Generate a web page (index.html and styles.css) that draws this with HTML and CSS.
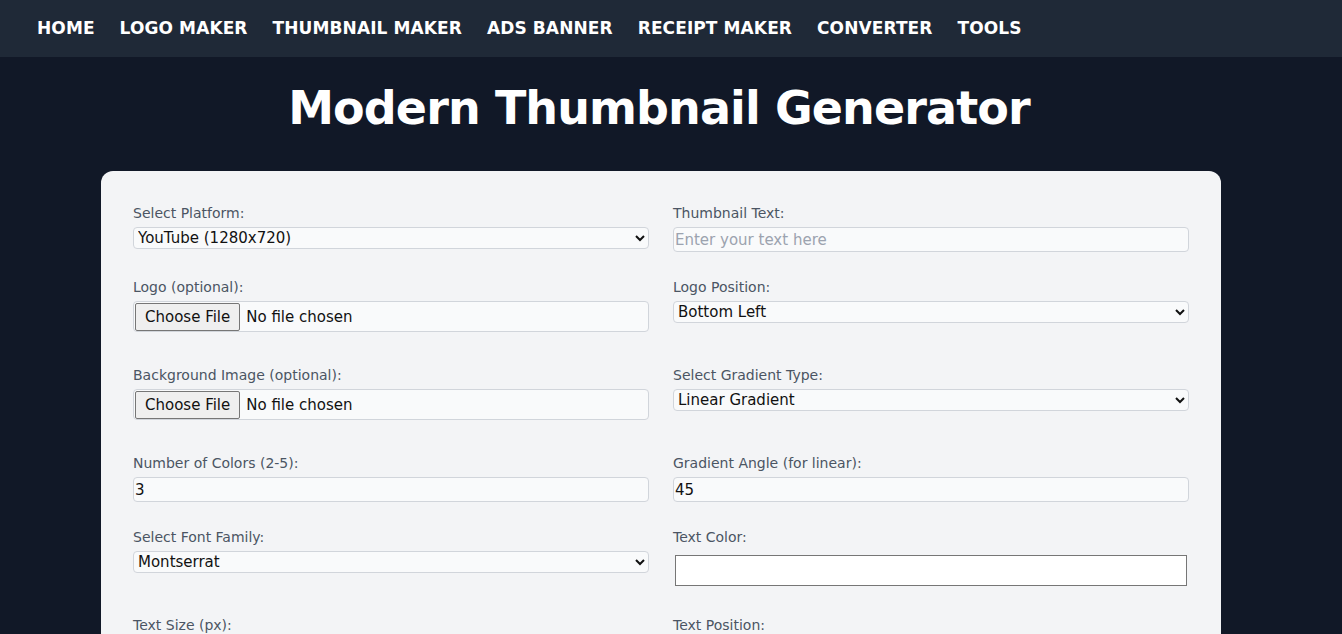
FILE: index.html
```html
<!DOCTYPE html>
<html lang="en">
<head>
<meta charset="utf-8">
<title>Modern Thumbnail Generator</title>
<link rel="stylesheet" href="styles.css">
</head>
<body>
<nav class="topnav">
  <a href="#" class="nav-link">HOME</a>
  <a href="#" class="nav-link">LOGO MAKER</a>
  <a href="#" class="nav-link">THUMBNAIL MAKER</a>
  <a href="#" class="nav-link">ADS BANNER</a>
  <a href="#" class="nav-link">RECEIPT MAKER</a>
  <a href="#" class="nav-link">CONVERTER</a>
  <a href="#" class="nav-link">TOOLS</a>
</nav>
<main class="page">
  <h1 class="title">Modern Thumbnail Generator</h1>
  <section class="card">
    <div class="form-grid">
      <div class="group">
        <label class="label" for="platform">Select Platform:</label>
        <select id="platform" class="field select">
          <option>YouTube (1280x720)</option>
          <option>Instagram (1080x1080)</option>
          <option>Facebook (1200x630)</option>
        </select>
      </div>
      <div class="group">
        <label class="label" for="text">Thumbnail Text:</label>
        <input id="text" class="field text" type="text" placeholder="Enter your text here">
      </div>
      <div class="group">
        <label class="label" for="logo">Logo (optional):</label>
        <input id="logo" class="field file" type="file">
      </div>
      <div class="group">
        <label class="label" for="logopos">Logo Position:</label>
        <select id="logopos" class="field select">
          <option>Bottom Left</option>
          <option>Bottom Right</option>
          <option>Top Left</option>
          <option>Top Right</option>
        </select>
      </div>
      <div class="group">
        <label class="label" for="bg">Background Image (optional):</label>
        <input id="bg" class="field file" type="file">
      </div>
      <div class="group">
        <label class="label" for="gradtype">Select Gradient Type:</label>
        <select id="gradtype" class="field select">
          <option>Linear Gradient</option>
          <option>Radial Gradient</option>
        </select>
      </div>
      <div class="group">
        <label class="label" for="ncolors">Number of Colors (2-5):</label>
        <input id="ncolors" class="field text" type="number" min="2" max="5" value="3">
      </div>
      <div class="group">
        <label class="label" for="angle">Gradient Angle (for linear):</label>
        <input id="angle" class="field text" type="number" value="45">
      </div>
      <div class="group">
        <label class="label" for="font">Select Font Family:</label>
        <select id="font" class="field select">
          <option>Montserrat</option>
          <option>Roboto</option>
          <option>Open Sans</option>
        </select>
      </div>
      <div class="group">
        <label class="label" for="tcolor">Text Color:</label>
        <input id="tcolor" class="field color" type="color" value="#ffffff">
      </div>
      <div class="group">
        <label class="label" for="tsize">Text Size (px):</label>
        <input id="tsize" class="field text" type="number" value="60">
      </div>
      <div class="group">
        <label class="label" for="tpos">Text Position:</label>
        <select id="tpos" class="field select">
          <option>Center</option>
          <option>Top</option>
          <option>Bottom</option>
        </select>
      </div>
      <div class="group">
        <label class="label" for="c1">Color 1:</label>
        <input id="c1" class="field color" type="color" value="#ff5f6d">
      </div>
      <div class="group">
        <label class="label" for="c2">Color 2:</label>
        <input id="c2" class="field color" type="color" value="#ffc371">
      </div>
      <div class="group">
        <label class="label" for="c3">Color 3:</label>
        <input id="c3" class="field color" type="color" value="#6a82fb">
      </div>
      <div class="group">
        <label class="label" for="shadow">Text Shadow:</label>
        <select id="shadow" class="field select">
          <option>None</option>
          <option>Soft</option>
          <option>Hard</option>
        </select>
      </div>
    </div>
    <div class="actions">
      <button class="btn" type="button">Generate Thumbnail</button>
      <button class="btn btn-alt" type="button">Download</button>
    </div>
    <div class="preview">
      <div class="preview-canvas">Preview</div>
    </div>
  </section>
  <footer class="footer">© 2024 Modern Thumbnail Generator</footer>
</main>
</body>
</html>
```
FILE: styles.css
```css
html {
  background: #111827;
}
::-webkit-scrollbar {
  width: 6px;
}
::-webkit-scrollbar-track {
  background: #2c2c2c;
}
::-webkit-scrollbar-thumb {
  background: #a3a3a3;
}
body {
  margin: 0;
  background: #111827;
  font-family: "DejaVu Sans", "Liberation Sans", sans-serif;
  color: #111827;
}
.topnav {
  height: 57px;
  background: #1f2937;
  display: flex;
  align-items: flex-start;
  gap: 25px;
  padding-left: 37px;
}
.nav-link {
  color: #ffffff;
  text-decoration: none;
  font-weight: bold;
  font-size: 17px;
  line-height: 56px;
  letter-spacing: 0.1px;
}
.page {
  padding-top: 24px;
  padding-bottom: 60px;
}
.title {
  margin: 0 0 35px 99px;
  width: 1120px;
  text-align: center;
  color: #ffffff;
  font-size: 46px;
  line-height: 55px;
  letter-spacing: -0.9px;
  font-weight: bold;
}
.card {
  width: 1120px;
  box-sizing: border-box;
  margin-left: 101px;
  background: #f3f4f6;
  border-radius: 12px;
  padding: 32px;
}
.form-grid {
  display: grid;
  grid-template-columns: 1fr 1fr;
  column-gap: 24px;
  row-gap: 25px;
}
.group {
  display: flex;
  flex-direction: column;
  align-items: stretch;
}
.label {
  font-size: 14px;
  line-height: 20px;
  color: #4b5563;
  margin-bottom: 4px;
}
.field {
  font-family: "DejaVu Sans", "Liberation Sans", sans-serif;
  font-size: 15px;
  color: #111111;
  background: #f9fafb;
  border: 1px solid #d1d5db;
  border-radius: 4px;
  box-sizing: border-box;
  margin: 0;
  width: 100%;
}
.select {
  height: 22px;
  padding: 0;
}
.text {
  height: 25px;
  padding: 0 1px;
}
.text::placeholder {
  color: #9ca3af;
}
.text::-webkit-inner-spin-button,
.text::-webkit-outer-spin-button {
  -webkit-appearance: none;
  margin: 0;
}
.file {
  height: 31px;
  padding: 1px;
  margin-bottom: 8px;
  color: #111111;
}
.file::file-selector-button {
  font-family: inherit;
  font-size: 15px;
  height: 28px;
  padding: 0 9px;
  margin: 0 6px 0 0;
  border: 1px solid #767676;
  border-radius: 2px;
  background: #efefef;
  color: #111111;
}
.color {
  height: 39px;
  padding: 0;
  border: 1px solid transparent;
  background: transparent;
}
.color::-webkit-color-swatch-wrapper {
  padding: 3px 1px;
}
.color::-webkit-color-swatch {
  border: 1px solid #767676;
  border-radius: 0;
}
.actions {
  display: flex;
  gap: 16px;
  margin-top: 32px;
}
.btn {
  font-family: inherit;
  font-size: 16px;
  font-weight: bold;
  color: #ffffff;
  background: #2563eb;
  border: none;
  border-radius: 6px;
  padding: 12px 24px;
}
.btn-alt {
  background: #10b981;
}
.preview {
  margin-top: 32px;
}
.preview-canvas {
  aspect-ratio: 16 / 9;
  background: #e5e7eb;
  border-radius: 8px;
  display: flex;
  align-items: center;
  justify-content: center;
  color: #6b7280;
  font-size: 18px;
}
.footer {
  margin: 40px 0 0 101px;
  width: 1120px;
  text-align: center;
  color: #9ca3af;
  font-size: 14px;
  padding-bottom: 400px;
}
```
